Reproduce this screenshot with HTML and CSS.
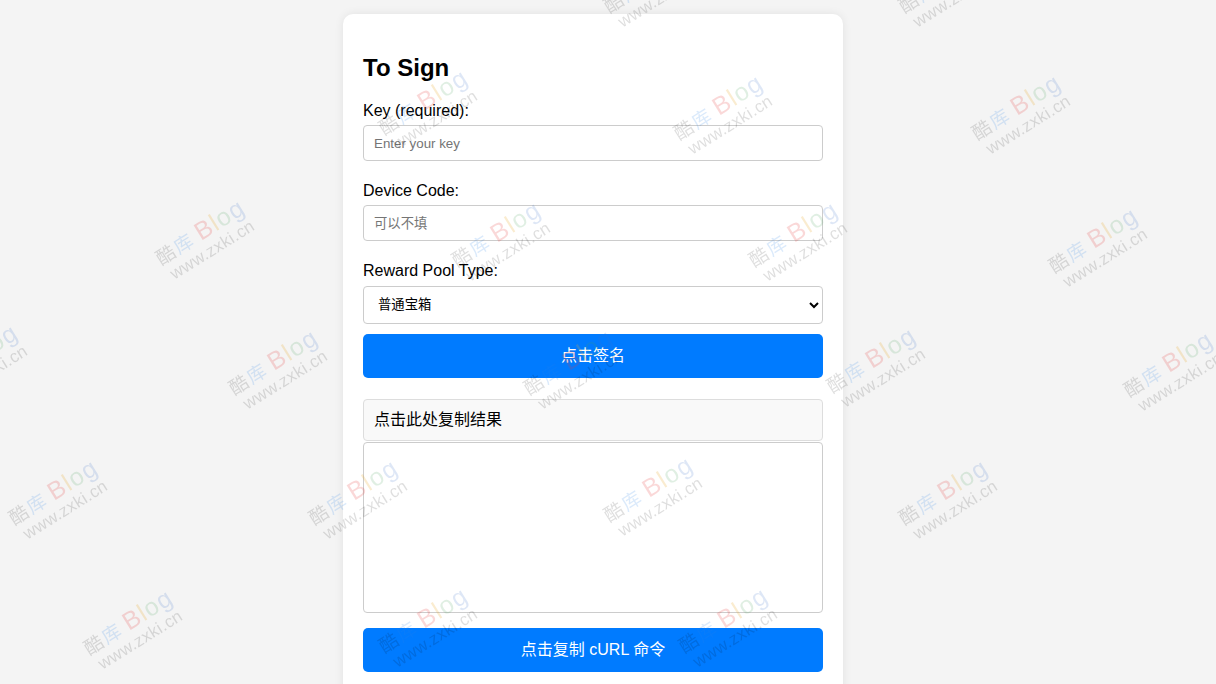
FILE: index.html
```html
<!DOCTYPE html>
<html lang="zh-CN">
<head>
<meta charset="utf-8">
<title>To Sign</title>
<link rel="stylesheet" href="styles.css">
</head>
<body>
<main class="card">
  <h2 class="title">To Sign</h2>
  <label class="label" for="key">Key (required):</label>
  <input class="field" id="key" type="text" placeholder="Enter your key">
  <label class="label" for="device">Device Code:</label>
  <input class="field" id="device" type="text" placeholder="可以不填">
  <label class="label" for="pool">Reward Pool Type:</label>
  <select class="select" id="pool">
    <option>普通宝箱</option>
  </select>
  <button class="btn" type="button">点击签名</button>
  <div class="result-head">点击此处复制结果</div>
  <textarea class="result-box"></textarea>
  <button class="btn btn-last" type="button">点击复制 cURL 命令</button>
</main>

<div class="wm-layer" aria-hidden="true">
  <div class="wm" style="left:598px;top:-4px"><div class="wm-l1"><span class="c1">酷</span><span class="c2">库</span><span class="b1">B</span><span class="b2">l</span><span class="b3">o</span><span class="b4">g</span></div><div class="wm-l2">www.zxki.cn</div></div>
  <div class="wm" style="left:893px;top:-4px"><div class="wm-l1"><span class="c1">酷</span><span class="c2">库</span><span class="b1">B</span><span class="b2">l</span><span class="b3">o</span><span class="b4">g</span></div><div class="wm-l2">www.zxki.cn</div></div>

  <div class="wm" style="left:373px;top:118px"><div class="wm-l1"><span class="c1">酷</span><span class="c2">库</span><span class="b1">B</span><span class="b2">l</span><span class="b3">o</span><span class="b4">g</span></div><div class="wm-l2">www.zxki.cn</div></div>
  <div class="wm" style="left:668px;top:123px"><div class="wm-l1"><span class="c1">酷</span><span class="c2">库</span><span class="b1">B</span><span class="b2">l</span><span class="b3">o</span><span class="b4">g</span></div><div class="wm-l2">www.zxki.cn</div></div>
  <div class="wm" style="left:966px;top:123px"><div class="wm-l1"><span class="c1">酷</span><span class="c2">库</span><span class="b1">B</span><span class="b2">l</span><span class="b3">o</span><span class="b4">g</span></div><div class="wm-l2">www.zxki.cn</div></div>

  <div class="wm" style="left:150px;top:248px"><div class="wm-l1"><span class="c1">酷</span><span class="c2">库</span><span class="b1">B</span><span class="b2">l</span><span class="b3">o</span><span class="b4">g</span></div><div class="wm-l2">www.zxki.cn</div></div>
  <div class="wm" style="left:446px;top:250px"><div class="wm-l1"><span class="c1">酷</span><span class="c2">库</span><span class="b1">B</span><span class="b2">l</span><span class="b3">o</span><span class="b4">g</span></div><div class="wm-l2">www.zxki.cn</div></div>
  <div class="wm" style="left:743px;top:250px"><div class="wm-l1"><span class="c1">酷</span><span class="c2">库</span><span class="b1">B</span><span class="b2">l</span><span class="b3">o</span><span class="b4">g</span></div><div class="wm-l2">www.zxki.cn</div></div>
  <div class="wm" style="left:1043px;top:256px"><div class="wm-l1"><span class="c1">酷</span><span class="c2">库</span><span class="b1">B</span><span class="b2">l</span><span class="b3">o</span><span class="b4">g</span></div><div class="wm-l2">www.zxki.cn</div></div>

  <div class="wm" style="left:-77px;top:373px"><div class="wm-l1"><span class="c1">酷</span><span class="c2">库</span><span class="b1">B</span><span class="b2">l</span><span class="b3">o</span><span class="b4">g</span></div><div class="wm-l2">www.zxki.cn</div></div>
  <div class="wm" style="left:223px;top:378px"><div class="wm-l1"><span class="c1">酷</span><span class="c2">库</span><span class="b1">B</span><span class="b2">l</span><span class="b3">o</span><span class="b4">g</span></div><div class="wm-l2">www.zxki.cn</div></div>
  <div class="wm" style="left:518px;top:378px"><div class="wm-l1"><span class="c1">酷</span><span class="c2">库</span><span class="b1">B</span><span class="b2">l</span><span class="b3">o</span><span class="b4">g</span></div><div class="wm-l2">www.zxki.cn</div></div>
  <div class="wm" style="left:821px;top:376px"><div class="wm-l1"><span class="c1">酷</span><span class="c2">库</span><span class="b1">B</span><span class="b2">l</span><span class="b3">o</span><span class="b4">g</span></div><div class="wm-l2">www.zxki.cn</div></div>
  <div class="wm" style="left:1118px;top:380px"><div class="wm-l1"><span class="c1">酷</span><span class="c2">库</span><span class="b1">B</span><span class="b2">l</span><span class="b3">o</span><span class="b4">g</span></div><div class="wm-l2">www.zxki.cn</div></div>

  <div class="wm" style="left:3px;top:508px"><div class="wm-l1"><span class="c1">酷</span><span class="c2">库</span><span class="b1">B</span><span class="b2">l</span><span class="b3">o</span><span class="b4">g</span></div><div class="wm-l2">www.zxki.cn</div></div>
  <div class="wm" style="left:303px;top:508px"><div class="wm-l1"><span class="c1">酷</span><span class="c2">库</span><span class="b1">B</span><span class="b2">l</span><span class="b3">o</span><span class="b4">g</span></div><div class="wm-l2">www.zxki.cn</div></div>
  <div class="wm" style="left:598px;top:505px"><div class="wm-l1"><span class="c1">酷</span><span class="c2">库</span><span class="b1">B</span><span class="b2">l</span><span class="b3">o</span><span class="b4">g</span></div><div class="wm-l2">www.zxki.cn</div></div>
  <div class="wm" style="left:893px;top:508px"><div class="wm-l1"><span class="c1">酷</span><span class="c2">库</span><span class="b1">B</span><span class="b2">l</span><span class="b3">o</span><span class="b4">g</span></div><div class="wm-l2">www.zxki.cn</div></div>

  <div class="wm" style="left:78px;top:638px"><div class="wm-l1"><span class="c1">酷</span><span class="c2">库</span><span class="b1">B</span><span class="b2">l</span><span class="b3">o</span><span class="b4">g</span></div><div class="wm-l2">www.zxki.cn</div></div>
  <div class="wm" style="left:373px;top:636px"><div class="wm-l1"><span class="c1">酷</span><span class="c2">库</span><span class="b1">B</span><span class="b2">l</span><span class="b3">o</span><span class="b4">g</span></div><div class="wm-l2">www.zxki.cn</div></div>
  <div class="wm" style="left:673px;top:636px"><div class="wm-l1"><span class="c1">酷</span><span class="c2">库</span><span class="b1">B</span><span class="b2">l</span><span class="b3">o</span><span class="b4">g</span></div><div class="wm-l2">www.zxki.cn</div></div>
</div>
</body>
</html>
```

FILE: styles.css
```css
* {
  box-sizing: border-box;
}

html, body {
  height: 100%;
}

body {
  margin: 0;
  padding: 14px 30px 0 0;
  background: #f4f4f4;
  font-family: "Liberation Sans", Arial, "Noto Sans CJK SC", sans-serif;
  color: #000;
  overflow: hidden;
}

.card {
  width: 500px;
  margin: 0 auto;
  padding: 20px 20px 40px;
  background: #fff;
  border-radius: 10px;
  box-shadow: 0 0 10px rgba(0, 0, 0, 0.08);
}

.title {
  margin: 20px 0 20px;
  font-size: 24px;
  font-weight: bold;
  line-height: 27.6px;
}

.label {
  display: block;
  font-size: 16px;
  line-height: 18.4px;
  margin-bottom: 5px;
}

.field {
  display: block;
  width: 100%;
  height: 36px;
  margin: 0 0 21px;
  padding: 0 10px;
  border: 1px solid #ccc;
  border-radius: 4px;
  font-family: "Liberation Sans", Arial, "Noto Sans CJK SC", sans-serif;
  font-size: 13.33px;
  color: #000;
  background: #fff;
  outline: none;
}

.field::placeholder {
  color: #757575;
}

.select {
  display: block;
  width: 100%;
  height: 38px;
  margin: 0 0 10px;
  padding: 0 10px;
  border: 1px solid #ccc;
  border-radius: 4px;
  background: #fff;
  font-family: "Liberation Sans", Arial, "Noto Sans CJK SC", sans-serif;
  font-size: 13.33px;
  color: #000;
}

.btn {
  display: block;
  width: 100%;
  height: 44px;
  margin: 0 0 21px;
  padding: 0;
  border: none;
  border-radius: 5px;
  background: #007bff;
  color: #fff;
  font-family: "Liberation Sans", Arial, "Noto Sans CJK SC", sans-serif;
  font-size: 16px;
  line-height: 44px;
  cursor: pointer;
}

.btn-last {
  margin-bottom: 0;
}

.result-head {
  padding: 10px;
  border: 1px solid #ddd;
  border-radius: 4px;
  background: #f9f9f9;
  font-size: 16px;
  line-height: 20px;
}

.result-box {
  display: block;
  width: 100%;
  height: 171px;
  margin: 1px 0 15px;
  padding: 10px;
  border: 1px solid #ccc;
  border-radius: 4px;
  resize: none;
  font-family: "Liberation Sans", Arial, "Noto Sans CJK SC", sans-serif;
  font-size: 14px;
  background: #fff;
}

/* watermark overlay */
.wm-layer {
  position: fixed;
  inset: 0;
  overflow: hidden;
  pointer-events: none;
  z-index: 10;
}

.wm {
  position: absolute;
  transform-origin: 0 0;
  transform: rotate(-32deg);
  white-space: nowrap;
  font-family: "Liberation Sans", Arial, "Noto Sans CJK SC", sans-serif;
}

.wm-l1 {
  display: flex;
  align-items: baseline;
  line-height: 1;
  height: 22px;
}

.wm-l1 .c1,
.wm-l1 .c2 {
  font-family: "Noto Sans CJK SC", sans-serif;
  font-size: 19px;
}

.wm-l1 .c1 {
  color: rgba(0, 0, 0, 0.13);
}

.wm-l1 .c2 {
  color: rgba(40, 130, 230, 0.17);
  margin-left: 2px;
  margin-right: 7px;
}

.wm-l1 .b1,
.wm-l1 .b2,
.wm-l1 .b3,
.wm-l1 .b4 {
  font-size: 25px;
  letter-spacing: 1px;
}

.b1 { color: rgba(230, 60, 60, 0.2); }
.b2 { color: rgba(230, 170, 40, 0.22); }
.b3 { color: rgba(70, 160, 90, 0.17); }
.b4 { color: rgba(60, 110, 200, 0.17); }

.wm-l2 {
  padding-left: 4px;
  margin-top: 4px;
  font-size: 17px;
  letter-spacing: 0.3px;
  line-height: 1;
  color: rgba(0, 0, 0, 0.13);
}
```
